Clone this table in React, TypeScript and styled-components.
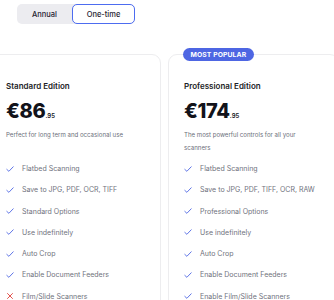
import styled, { createGlobalStyle } from "styled-components";

const GlobalStyle = createGlobalStyle`
  body {
    margin: 0;
    background: #ffffff;
    font-family: Inter, "Noto Sans", sans-serif;
    -webkit-font-smoothing: antialiased;
  }
`;

const Page = styled.div`
  width: 334px;
  height: 300px;
  overflow: hidden;
  padding-top: 4px;
  box-sizing: border-box;
`;

const Toggle = styled.div`
  display: flex;
  width: fit-content;
  margin-left: 17px;
  background: #ececf0;
  border-radius: 5px;
  height: 20px;
`;

const Segment = styled.button<{ $active?: boolean; $width: number }>`
  width: ${(p) => p.$width}px;
  height: 20px;
  box-sizing: border-box;
  border: 1px solid ${(p) => (p.$active ? "#4d6cf0" : "transparent")};
  background: ${(p) => (p.$active ? "#ffffff" : "transparent")};
  border-radius: 5px;
  font-family: inherit;
  font-size: 7.5px;
  font-weight: 500;
  color: #1f2230;
  padding: 0;
  cursor: pointer;
`;

const Cards = styled.div`
  display: flex;
  gap: 7px;
  margin-top: 30px;
  margin-left: -10px;
`;

const Card = styled.div`
  position: relative;
  flex-shrink: 0;
  width: 171px;
  height: 280px;
  box-sizing: border-box;
  border: 1px solid #ededef;
  border-radius: 9px;
  padding: 25px 15px 0;
`;

const Badge = styled.span`
  position: absolute;
  top: -7px;
  left: 14px;
  height: 13px;
  padding: 0 7.5px;
  border-radius: 7px;
  background: #4e66e3;
  color: #ffffff;
  font-size: 6.8px;
  font-weight: 700;
  line-height: 13px;
  letter-spacing: 0.1px;
`;

const Title = styled.h3`
  margin: 0;
  font-size: 8px;
  font-weight: 600;
  line-height: 12px;
  color: #1c1d26;
`;

const Price = styled.div`
  margin-top: 7px;
  display: flex;
  align-items: baseline;
  color: #12131a;
`;

const Amount = styled.span`
  font-size: 20px;
  font-weight: 800;
  line-height: 24px;
  letter-spacing: -0.3px;
`;

const Cents = styled.span`
  font-size: 6px;
  font-weight: 600;
`;

const Description = styled.p`
  margin: 5px 0 0;
  min-height: 26px;
  font-size: 6.1px;
  line-height: 13px;
  color: #6b6e7a;
`;

const Features = styled.ul`
  list-style: none;
  margin: 9px 0 0;
  padding: 0;
  display: flex;
  flex-direction: column;
  gap: 10.3px;
`;

const Feature = styled.li`
  display: flex;
  align-items: center;
  gap: 8px;
  height: 11px;
  font-size: 7px;
  color: #6f727d;
`;

const Mark = styled.svg`
  width: 8px;
  height: 8px;
  flex-shrink: 0;
`;

function Check() {
  return (
    <Mark viewBox="0 0 8 8" fill="none">
      <path d="M0.8 4.4 L2.9 6.3 L7.2 1.8" stroke="#4e66e3" strokeWidth="0.9" strokeLinecap="round" strokeLinejoin="round" />
    </Mark>
  );
}

function Cross() {
  return (
    <Mark viewBox="0 0 8 8" fill="none">
      <path d="M1.5 1.5 L6.5 6.5 M6.5 1.5 L1.5 6.5" stroke="#e0413a" strokeWidth="0.9" strokeLinecap="round" />
    </Mark>
  );
}

type Plan = {
  name: string;
  price: string;
  cents: string;
  description: string;
  popular?: boolean;
  features: { label: string; included: boolean }[];
};

const plans: Plan[] = [
  {
    name: "Standard Edition",
    price: "€86",
    cents: ".95",
    description: "Perfect for long term and occasional use",
    features: [
      { label: "Flatbed Scanning", included: true },
      { label: "Save to JPG, PDF, OCR, TIFF", included: true },
      { label: "Standard Options", included: true },
      { label: "Use indefinitely", included: true },
      { label: "Auto Crop", included: true },
      { label: "Enable Document Feeders", included: true },
      { label: "Film/Slide Scanners", included: false },
    ],
  },
  {
    name: "Professional Edition",
    price: "€174",
    cents: ".95",
    description: "The most powerful controls for all your scanners",
    popular: true,
    features: [
      { label: "Flatbed Scanning", included: true },
      { label: "Save to JPG, PDF, TIFF, OCR, RAW", included: true },
      { label: "Professional Options", included: true },
      { label: "Use indefinitely", included: true },
      { label: "Auto Crop", included: true },
      { label: "Enable Document Feeders", included: true },
      { label: "Enable Film/Slide Scanners", included: true },
    ],
  },
];

export default function App() {
  return (
    <Page>
      <GlobalStyle />
      <Toggle>
        <Segment $width={55}>Annual</Segment>
        <Segment $width={63} $active>
          One-time
        </Segment>
      </Toggle>
      <Cards>
        {plans.map((plan) => (
          <Card key={plan.name}>
            {plan.popular && <Badge>MOST POPULAR</Badge>}
            <Title>{plan.name}</Title>
            <Price>
              <Amount>{plan.price}</Amount>
              <Cents>{plan.cents}</Cents>
            </Price>
            <Description>{plan.description}</Description>
            <Features>
              {plan.features.map((f) => (
                <Feature key={f.label}>
                  {f.included ? <Check /> : <Cross />}
                  {f.label}
                </Feature>
              ))}
            </Features>
          </Card>
        ))}
      </Cards>
    </Page>
  );
}
